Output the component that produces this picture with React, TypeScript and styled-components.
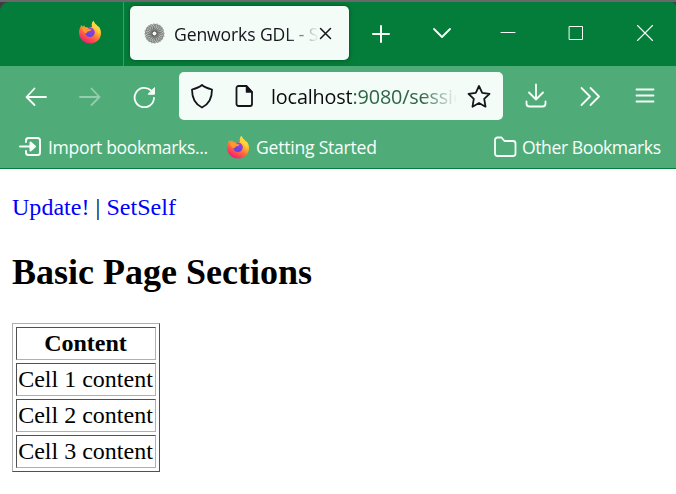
import React from "react";
import styled, { createGlobalStyle } from "styled-components";

const GlobalStyle = createGlobalStyle`
  * { box-sizing: border-box; }
  html, body { margin: 0; background: #fff; }
  svg { display: block; flex: none; }
`;

const Window = styled.div`
  width: 676px;
  height: 494px;
  display: flex;
  flex-direction: column;
  overflow: hidden;
  background: #fff;
`;

const Chrome = styled.header`
  flex: none;
  background: #4fac79;
  border-bottom: 1px solid #057d3a;
  font-family: "Open Sans", "Noto Sans", sans-serif;
`;

const Backdrop = styled.div`
  background: #3c4043;
  border-top: 2px solid #6a686b;
`;

const TitleBar = styled.div`
  height: 64px;
  display: flex;
  align-items: stretch;
  background: #057d3a;
  border-radius: 9px 5px 0 0;
`;

const PinnedTab = styled.div`
  flex: none;
  width: 124px;
  padding: 18px 0 0 78px;
  border-right: 1px solid #3d9c68;
`;

const Tab = styled.div`
  flex: none;
  width: 219px;
  height: 54px;
  margin: 4px 0 0 6px;
  padding-left: 14px;
  display: flex;
  align-items: center;
  background: #f3fcf7;
  border-radius: 5px;
  box-shadow: 0 0 4px rgba(0, 40, 15, 0.6);
`;

const TabTitle = styled.span`
  width: 145px;
  margin: 1px 0 0 9px;
  white-space: nowrap;
  font-size: 17.6px;
  line-height: 26px;
  letter-spacing: -0.13px;
  color: #15141a;
  mask-image: linear-gradient(to right, #000 112px, transparent 145px);
`;

const TitleButton = styled.div<{ $w: number }>`
  flex: none;
  width: ${(p) => p.$w}px;
  display: flex;
  justify-content: center;
  padding-top: 20px;
`;

const NavBar = styled.div`
  height: 60px;
  display: flex;
  align-items: center;
`;

const NavButton = styled.div<{ $w: number }>`
  flex: none;
  width: ${(p) => p.$w}px;
  display: flex;
  justify-content: center;
`;

const UrlBar = styled.div`
  flex: none;
  width: 324px;
  height: 48px;
  padding: 0 11px;
  display: flex;
  align-items: center;
  background: #f3fcf7;
  border-radius: 5px;
`;

const PageInfo = styled.div`
  margin-left: 21px;
`;

const Url = styled.span`
  width: 186px;
  margin: 2px 9px 0 18px;
  white-space: nowrap;
  font-size: 19.8px;
  line-height: 30px;
  letter-spacing: -0.15px;
  color: #2e6547;
  mask-image: linear-gradient(to right, #000 150px, transparent 186px);
`;

const Host = styled.span`
  color: #0b0b0d;
`;

const BookmarksBar = styled.div`
  height: 42px;
  padding: 0 15px 0 18px;
  display: flex;
  align-items: center;
`;

const Bookmark = styled.div<{ $w: number; $gap: number; $spacing: number }>`
  flex: none;
  width: ${(p) => p.$w}px;
  display: flex;
  align-items: center;
  gap: ${(p) => p.$gap}px;
  font-size: 17.6px;
  line-height: 26px;
  white-space: nowrap;
  letter-spacing: ${(p) => p.$spacing}px;
  color: #f8fffa;
`;

const Spring = styled.div`
  flex: 1;
`;

const Page = styled.main`
  padding: 24px 12px 0;
  font-family: "Liberation Serif", "Times New Roman", serif;
  font-size: 24px;
  line-height: 28px;
  color: #000;
`;

const Links = styled.div`
  white-space: nowrap;
  letter-spacing: 0.03px;
`;

const Link = styled.a`
  color: #0000ff;
  text-decoration: none;
`;

const Heading = styled.h2`
  margin: 31px 0 30px;
  font-size: 36px;
  line-height: 41px;
  font-weight: bold;
`;

const Table = styled.table`
  width: 148px;
  border: 1px solid;
  border-color: #b0b0b0 #505050 #505050 #b0b0b0;
  border-collapse: separate;
  border-spacing: 3px;
`;

const cell = `
  height: 33px;
  padding: 0 1px 2px 0;
  border: 1px solid;
  border-color: #505050 #b0b0b0 #b0b0b0 #505050;
  line-height: 28px;
  text-align: center;
  white-space: nowrap;
`;
const HeadCell = styled.th`${cell}`;
const Cell = styled.td`${cell}`;

const Stroke = styled.svg<{ $c?: string; $sw?: number }>`
  fill: none;
  stroke: ${(p) => p.$c ?? "#f8fffa"};
  stroke-width: ${(p) => p.$sw ?? 1.8};
  stroke-linecap: round;
  stroke-linejoin: round;
`;

function Firefox({ id }: { id: string }) {
  return (
    <svg width="24" height="24" viewBox="0 0 24 24">
      <defs>
        <linearGradient id={`${id}-body`} x1="0.8" y1="0.05" x2="0.25" y2="1">
          <stop offset="0" stopColor="#fff04f" />
          <stop offset="0.35" stopColor="#ffb52b" />
          <stop offset="0.62" stopColor="#ff6540" />
          <stop offset="1" stopColor="#f0107d" />
        </linearGradient>
        <linearGradient id={`${id}-globe`} x1="0.7" y1="0" x2="0.3" y2="1">
          <stop offset="0" stopColor="#a83bdc" />
          <stop offset="1" stopColor="#5547de" />
        </linearGradient>
      </defs>
      <path
        fill={`url(#${id}-body)`}
        d="M15.3.8c1.1 2.9 3 3.5 4.5 5.8.9-.1 1.5.6 2.1 1.6 1.3 2.5 1.6 6.1.2 9.1-1.7 3.9-5.5 6.3-9.9 6.3C5.9 23.600 1 18.800 1 12.600c0-2 .5-3.900 1.500-5.500.2-1 .5-1.500 1.100-2.100l.8 1.800 2-1.500.4 1.900c1.500-.2 2.700.1 3.800.8l3.400-1.200C13.300 4.900 13.800 2.500 15.300.8z"
      />
      <circle cx="12" cy="12.300" r="4.800" fill={`url(#${id}-globe)`} />
      <path
        fill="#ff9a2a"
        d="M4.300 8.200c2-1.500 4.300-1.100 6.300.2 1 .8 2.100 1 3 1-.3 1.400-2.500 1.700-3.700 2.200-1.500.8-.4 2.300-2.700 1.500-1.700-.7-2.800-3-2.900-4.900z"
      />
      <path
        fill="#ffd43c"
        d="M15.300.8c1.100 2.900 3 3.500 4.500 5.800 1.700 2.600 1.800 5.300.8 7.500-.6-3.300-2.500-5.100-5-6.400-1.700-1.300-2-4-.3-6.900z"
      />
    </svg>
  );
}

function Spirograph() {
  const turns = Array.from({ length: 20 }, (_, i) => i * 18);
  return (
    <svg width="21" height="21" viewBox="-10.500 -10.500 21 21" fill="none" stroke="#5a5a5a" strokeWidth="0.550">
      <circle r="6" stroke="#8c8c8c" strokeWidth="7" strokeOpacity="0.400" />
      {turns.map((a) => (
        <path key={a} d="M2 0C4-4 8-4 10 0M3 0C5 2 7 4 9 3" transform={`rotate(${a})`} />
      ))}
      <circle r="2.600" strokeWidth="0.900" />
      <circle r="1.700" fill="#f3fcf7" stroke="none" />
    </svg>
  );
}

export default function App() {
  return (
    <Window>
      <GlobalStyle />
      <Chrome>
        <Backdrop>
          <TitleBar>
            <PinnedTab><Firefox id="pinned" /></PinnedTab>
            <Tab>
              <Spirograph />
              <TabTitle>Genworks GDL - S</TabTitle>
              <Stroke width="13" height="13" $c="#15141a" $sw={1.5}>
                <path d="M1.500 1.500l10 10M11.500 1.500l-10 10" />
              </Stroke>
            </Tab>
            <TitleButton $w={64}>
              <Stroke width="24" height="24" $sw={2}><path d="M12 4v16M4 12h16" /></Stroke>
            </TitleButton>
            <TitleButton $w={58}>
              <Stroke width="24" height="24"><path d="M4 7l8 8 8-8" /></Stroke>
            </TitleButton>
            <TitleButton $w={73}>
              <Stroke width="24" height="24" $sw={1}><path d="M5 10.500h14" /></Stroke>
            </TitleButton>
            <TitleButton $w={63}>
              <Stroke width="24" height="24" $sw={1}><path d="M5.500 4.500h13v13h-13z" /></Stroke>
            </TitleButton>
            <TitleButton $w={69}>
              <Stroke width="24" height="24" $sw={1.1}><path d="M7.500 3.500l15 15M22.500 3.500l-15 15" /></Stroke>
            </TitleButton>
          </TitleBar>
        </Backdrop>
        <NavBar>
          <NavButton $w={72}>
            <Stroke width="24" height="24"><path d="M22 13H2.500M10.500 4.500L2.500 13l8 8" /></Stroke>
          </NavButton>
          <NavButton $w={36}>
            <Stroke width="24" height="24" $c="#95cdae"><path d="M2 13h19.500M13.500 4.500l8 8.500-8 8" /></Stroke>
          </NavButton>
          <NavButton $w={71}>
            <Stroke width="24" height="24">
              <path d="M22 14A9.700 9.700 0 1 1 19 6.500" />
              <path d="M22.500 4v6.200h-6z" fill="#f8fffa" strokeWidth="1" />
            </Stroke>
          </NavButton>
          <UrlBar>
            <Stroke width="24" height="26" $c="#15141a">
              <path d="M12 2C9.500 4.500 6 5.500 2 6.500C2 15 4.500 21 12 24.500C19.500 21 22 15 22 6.500C18 5.500 14.500 4.500 12 2z" />
            </Stroke>
            <PageInfo>
              <Stroke width="18" height="24" $c="#15141a">
                <path d="M3.500 2h8l5.500 6v12a2 2 0 0 1-2 2H3.500a2 2 0 0 1-2-2V4a2 2 0 0 1 2-2z" />
                <path d="M11.500 2v6H17z" fill="#15141a" strokeWidth="1.500" />
              </Stroke>
            </PageInfo>
            <Url><Host>localhost</Host>:9080/sessic</Url>
            <Stroke width="26" height="26" $c="#15141a">
              <path d="M13 3l3.200 6.800 7.300 1-5.300 5.100 1.300 7.800-6.500-3.700-6.500 3.700 1.300-7.800-5.300-5.100 7.300-1z" />
            </Stroke>
          </UrlBar>
          <NavButton $w={66}>
            <Stroke width="24" height="26">
              <path d="M12 1.500v15M5 9.500l7 7 7-7M2.500 18.500v2a3 3 0 0 0 3 3h13a3 3 0 0 0 3-3v-2" />
            </Stroke>
          </NavButton>
          <NavButton $w={42}>
            <Stroke width="24" height="24"><path d="M3.500 4l8.500 8.500L3.500 21M12.500 4l8.500 8.500-8.500 8.500" /></Stroke>
          </NavButton>
          <NavButton $w={65}>
            <Stroke width="24" height="24"><path d="M4.500 5.500h17M4.500 11.500h17M4.500 17.500h17" /></Stroke>
          </NavButton>
        </NavBar>
        <BookmarksBar>
          <Bookmark $w={208} $gap={6} $spacing={-0.35}>
            <Stroke width="24" height="22" $sw={2}>
              <path d="M8 6V4.500A2.500 2.500 0 0 1 10.500 2h9A2.500 2.500 0 0 1 22 4.500v12a2.500 2.500 0 0 1-2.500 2.500h-9A2.500 2.500 0 0 1 8 16.500V15M2 10.500h12" />
              <path d="M12.500 6.500l4.500 4-4.500 4z" fill="#f8fffa" />
            </Stroke>
            Import bookmarks...
          </Bookmark>
          <Bookmark $w={152} $gap={6} $spacing={-0.24}>
            <Firefox id="start" />
            Getting Started
          </Bookmark>
          <Spring />
          <Bookmark $w={168} $gap={5} $spacing={-0.43}>
            <Stroke width="24" height="22">
              <path d="M4.500 1.500h4l3 3.500h8.500a2.500 2.500 0 0 1 2.500 2.500v10a2.500 2.500 0 0 1-2.500 2.500H4.500A2.500 2.500 0 0 1 2 17.500V4a2.500 2.500 0 0 1 2.500-2.500z" />
            </Stroke>
            Other Bookmarks
          </Bookmark>
        </BookmarksBar>
      </Chrome>
      <Page>
        <Links><Link>Update!</Link> | <Link>SetSelf</Link></Links>
        <Heading>Basic Page Sections</Heading>
        <Table>
          <thead><tr><HeadCell>Content</HeadCell></tr></thead>
          <tbody>
            {[1, 2, 3].map((n) => (
              <tr key={n}><Cell>Cell {n} content</Cell></tr>
            ))}
          </tbody>
        </Table>
      </Page>
    </Window>
  );
}
